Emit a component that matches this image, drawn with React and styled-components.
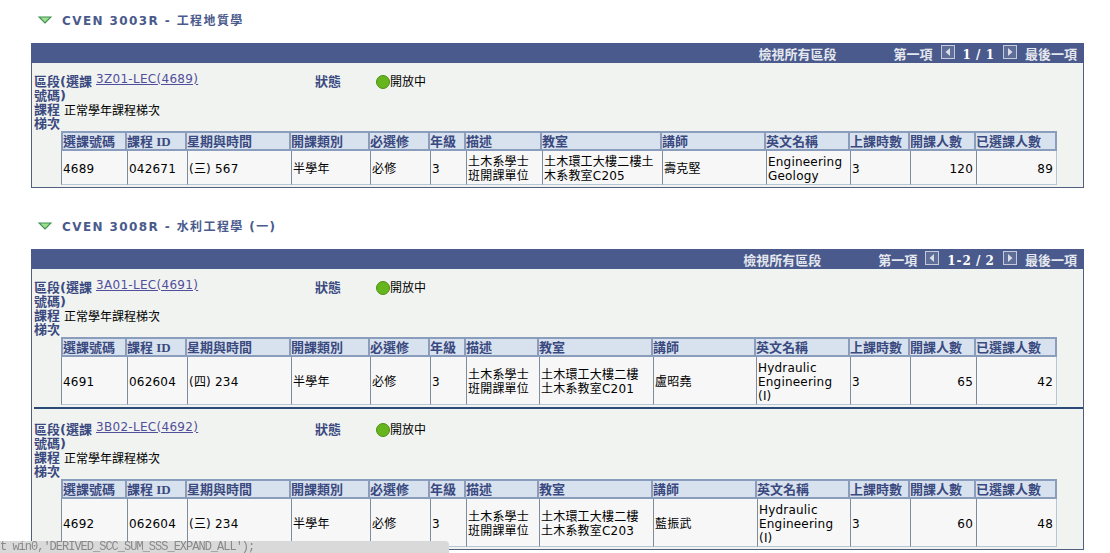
import React from 'react';
import styled, { createGlobalStyle } from 'styled-components';

const sans = '"DejaVu Sans", "Noto Sans CJK TC", sans-serif';
const serif = '"Liberation Serif", "Noto Sans CJK TC", serif';

const columns = [
  '選課號碼', '課程 ID', '星期與時間', '開課類別', '必選修', '年級', '描述',
  '教室', '講師', '英文名稱', '上課時數', '開課人數', '已選課人數',
];

const courses = [
  {
    title: 'CVEN 3003R - 工程地質學',
    range: '1 / 1',
    sections: [
      {
        code: '3Z01-LEC(4689)',
        widths: [66, 60, 104, 79, 60, 36, 76, 120, 104, 84, 60, 66, 81],
        cells: ['4689', '042671', '(三) 567', '半學年', '必修', '3', '土木系學士班開課單位', '土木環工大樓二樓土木系教室C205', '壽克堅', 'Engineering Geology', '3', '120', '89'],
      },
    ],
  },
  {
    title: 'CVEN 3008R - 水利工程學 (一)',
    range: '1-2 / 2',
    sections: [
      {
        code: '3A01-LEC(4691)',
        widths: [66, 60, 104, 79, 60, 36, 73, 114, 103, 94, 60, 66, 81],
        cells: ['4691', '062604', '(四) 234', '半學年', '必修', '3', '土木系學士班開課單位', '土木環工大樓二樓土木系教室C201', '盧昭堯', 'Hydraulic Engineering (I)', '3', '65', '42'],
      },
      {
        code: '3B02-LEC(4692)',
        widths: [66, 60, 104, 79, 60, 36, 73, 114, 104, 93, 60, 66, 81],
        cells: ['4692', '062604', '(三) 234', '半學年', '必修', '3', '土木系學士班開課單位', '土木環工大樓二樓土木系教室C203', '藍振武', 'Hydraulic Engineering (I)', '3', '60', '48'],
      },
    ],
  },
];

const GlobalStyle = createGlobalStyle`
  html, body {
    margin: 0;
    height: 100%;
    overflow: hidden;
    background: #fff;
  }
`;

const Page = styled.div`
  padding-top: 12px;
  font-family: ${sans};
  font-size: 12px;
  line-height: 14px;
  color: #000;
`;

const Course = styled.section`
  margin-bottom: 30px;
`;

const CourseTitle = styled.h2`
  display: flex;
  align-items: center;
  gap: 10px;
  height: 16px;
  margin: 0 0 15px 38px;
  font-size: 12px;
  font-weight: bold;
  letter-spacing: 1.4px;
  color: #4a5a8c;

  & > span {
    padding-top: 1px;
  }
`;

const Panel = styled.div`
  width: 1053px;
  margin-left: 31px;
  box-sizing: border-box;
  border: 1px solid #4f5f7d;
  border-top: 0;
  background: #f1f3f0;
`;

const PanelHeader = styled.div`
  display: flex;
  align-items: center;
  justify-content: flex-end;
  height: 20px;
  box-sizing: border-box;
  margin: 0 -1px;
  padding: 3px 7px 0 0;
  background: #4a5a8c;
  font-size: 13px;
  font-weight: bold;
  color: #e4e7ee;
`;

const ViewAll = styled.span`
  margin-right: 57px;
`;

const Pager = styled.span`
  display: flex;
  align-items: center;
  gap: 8px;
`;

const Count = styled.span`
  font-family: "DejaVu Serif", serif;
  font-size: 12px;
  letter-spacing: 1px;
  word-spacing: -1px;
  color: #fff;
`;

const PagerButton = styled.svg`
  display: block;
  width: 14px;
  height: 14px;
  margin-top: -6px;
`;

const Block = styled.div`
  padding: ${(props) => (props.$divided ? '11px' : '9px')} 0 2px;
  margin-left: 2px;
  border-top: ${(props) => (props.$divided ? '2px solid #2c4a78' : '0')};
`;

const FieldRow = styled.div`
  display: flex;
  align-items: flex-start;
`;

const Label = styled.span`
  flex: none;
  width: ${(props) => props.$width}px;
  margin-top: ${(props) => (props.$offset ? '3px' : '0')};
  font-size: 13px;
  font-weight: bold;
  color: #3a4a80;
`;

const CodeLink = styled.a`
  flex: none;
  width: 221px;
  padding-left: 2px;
  box-sizing: border-box;
  letter-spacing: 0.3px;
  color: #514f9c;
  text-decoration: underline;
`;

const Status = styled.span`
  display: flex;
  align-items: center;
  margin-top: 3px;
`;

const Dot = styled.span`
  width: 12px;
  height: 12px;
  border: 1px solid #4c8f16;
  border-radius: 50%;
  background: #66b51c;
`;

const Track = styled.span`
  margin-top: 1px;
`;

const Table = styled.table`
  width: 996px;
  margin-left: 27px;
  table-layout: fixed;
  border-collapse: separate;
  border-spacing: 0;
`;

const Col = styled.col`
  width: ${(props) => props.$width}px;
`;

const Th = styled.th`
  height: 15px;
  padding: 1px 1px 0 0;
  border: 2px solid #8a9dbd;
  border-left-width: ${(props) => (props.$first ? '2px' : '0')};
  background: #d8e1ee;
  font-family: ${serif};
  font-size: 13px;
  font-weight: bold;
  text-align: left;
  white-space: nowrap;
  overflow: hidden;
  color: #3a4a80;
`;

const Td = styled.td`
  padding: 4px 3px 1px 1px;
  border-left: 1px solid #7f8c9e;
  border-right: ${(props) => (props.$last ? '1px solid #b9c6d6' : '0')};
  border-bottom: 1px solid #b9c6d6;
  background: #f7f7f7;
  letter-spacing: 0.2px;
  text-align: ${(props) => (props.$right ? 'right' : 'left')};
  vertical-align: middle;
`;

const StatusBar = styled.div`
  position: fixed;
  left: 0;
  bottom: 0;
  width: 449px;
  height: 12px;
  overflow: hidden;
  border-top-right-radius: 4px;
  background: #d9d9d9;
  font-family: "Liberation Mono", monospace;
  font-size: 12px;
  line-height: 12px;
  letter-spacing: -1px;
  white-space: nowrap;
  color: #888;
`;

const TitleArrow = () => (
  <svg width="14" height="8" viewBox="0 0 14 8">
    <path d="M1 1 H13 L7 7 Z" fill="#9fe08f" stroke="#3f8f55" strokeWidth="1.2" />
  </svg>
);

const PagerIcon = ({ next }) => (
  <PagerButton viewBox="0 0 14 14">
    <rect x="0.5" y="0.5" width="13" height="13" fill="#5f6d99" stroke="#c4cad8" />
    <path d={next ? 'M5 3 L9.5 7 L5 11 Z' : 'M9 3 L4.5 7 L9 11 Z'} fill="#d8dce6" />
  </PagerButton>
);

const Section = ({ section, divided }) => (
  <Block $divided={divided}>
    <FieldRow>
      <Label $width={60} $offset>區段(選課號碼)</Label>
      <CodeLink href="#">{section.code}</CodeLink>
      <Label $width={61} $offset>狀態</Label>
      <Status>
        <Dot />
        <span>開放中</span>
      </Status>
    </FieldRow>
    <FieldRow>
      <Label $width={30}>課程梯次</Label>
      <Track>正常學年課程梯次</Track>
    </FieldRow>
    <Table>
      <colgroup>
        {section.widths.map((width, i) => <Col key={i} $width={width} />)}
      </colgroup>
      <thead>
        <tr>
          {columns.map((name, i) => <Th key={name} $first={i === 0}>{name}</Th>)}
        </tr>
      </thead>
      <tbody>
        <tr>
          {section.cells.map((cell, i) => (
            <Td key={i} $right={i >= 11} $last={i === 12}>{cell}</Td>
          ))}
        </tr>
      </tbody>
    </Table>
  </Block>
);

const App = () => (
  <Page>
    <GlobalStyle />
    {courses.map((course) => (
      <Course key={course.title}>
        <CourseTitle>
          <TitleArrow />
          <span>{course.title}</span>
        </CourseTitle>
        <Panel>
          <PanelHeader>
            <ViewAll>檢視所有區段</ViewAll>
            <Pager>
              <span>第一項</span>
              <PagerIcon />
              <Count>{course.range}</Count>
              <PagerIcon next />
              <span>最後一項</span>
            </Pager>
          </PanelHeader>
          {course.sections.map((section, i) => (
            <Section key={section.code} section={section} divided={i > 0} />
          ))}
        </Panel>
      </Course>
    ))}
    <StatusBar>t win0,'DERIVED_SCC_SUM_SSS_EXPAND_ALL');</StatusBar>
  </Page>
);

export default App;
